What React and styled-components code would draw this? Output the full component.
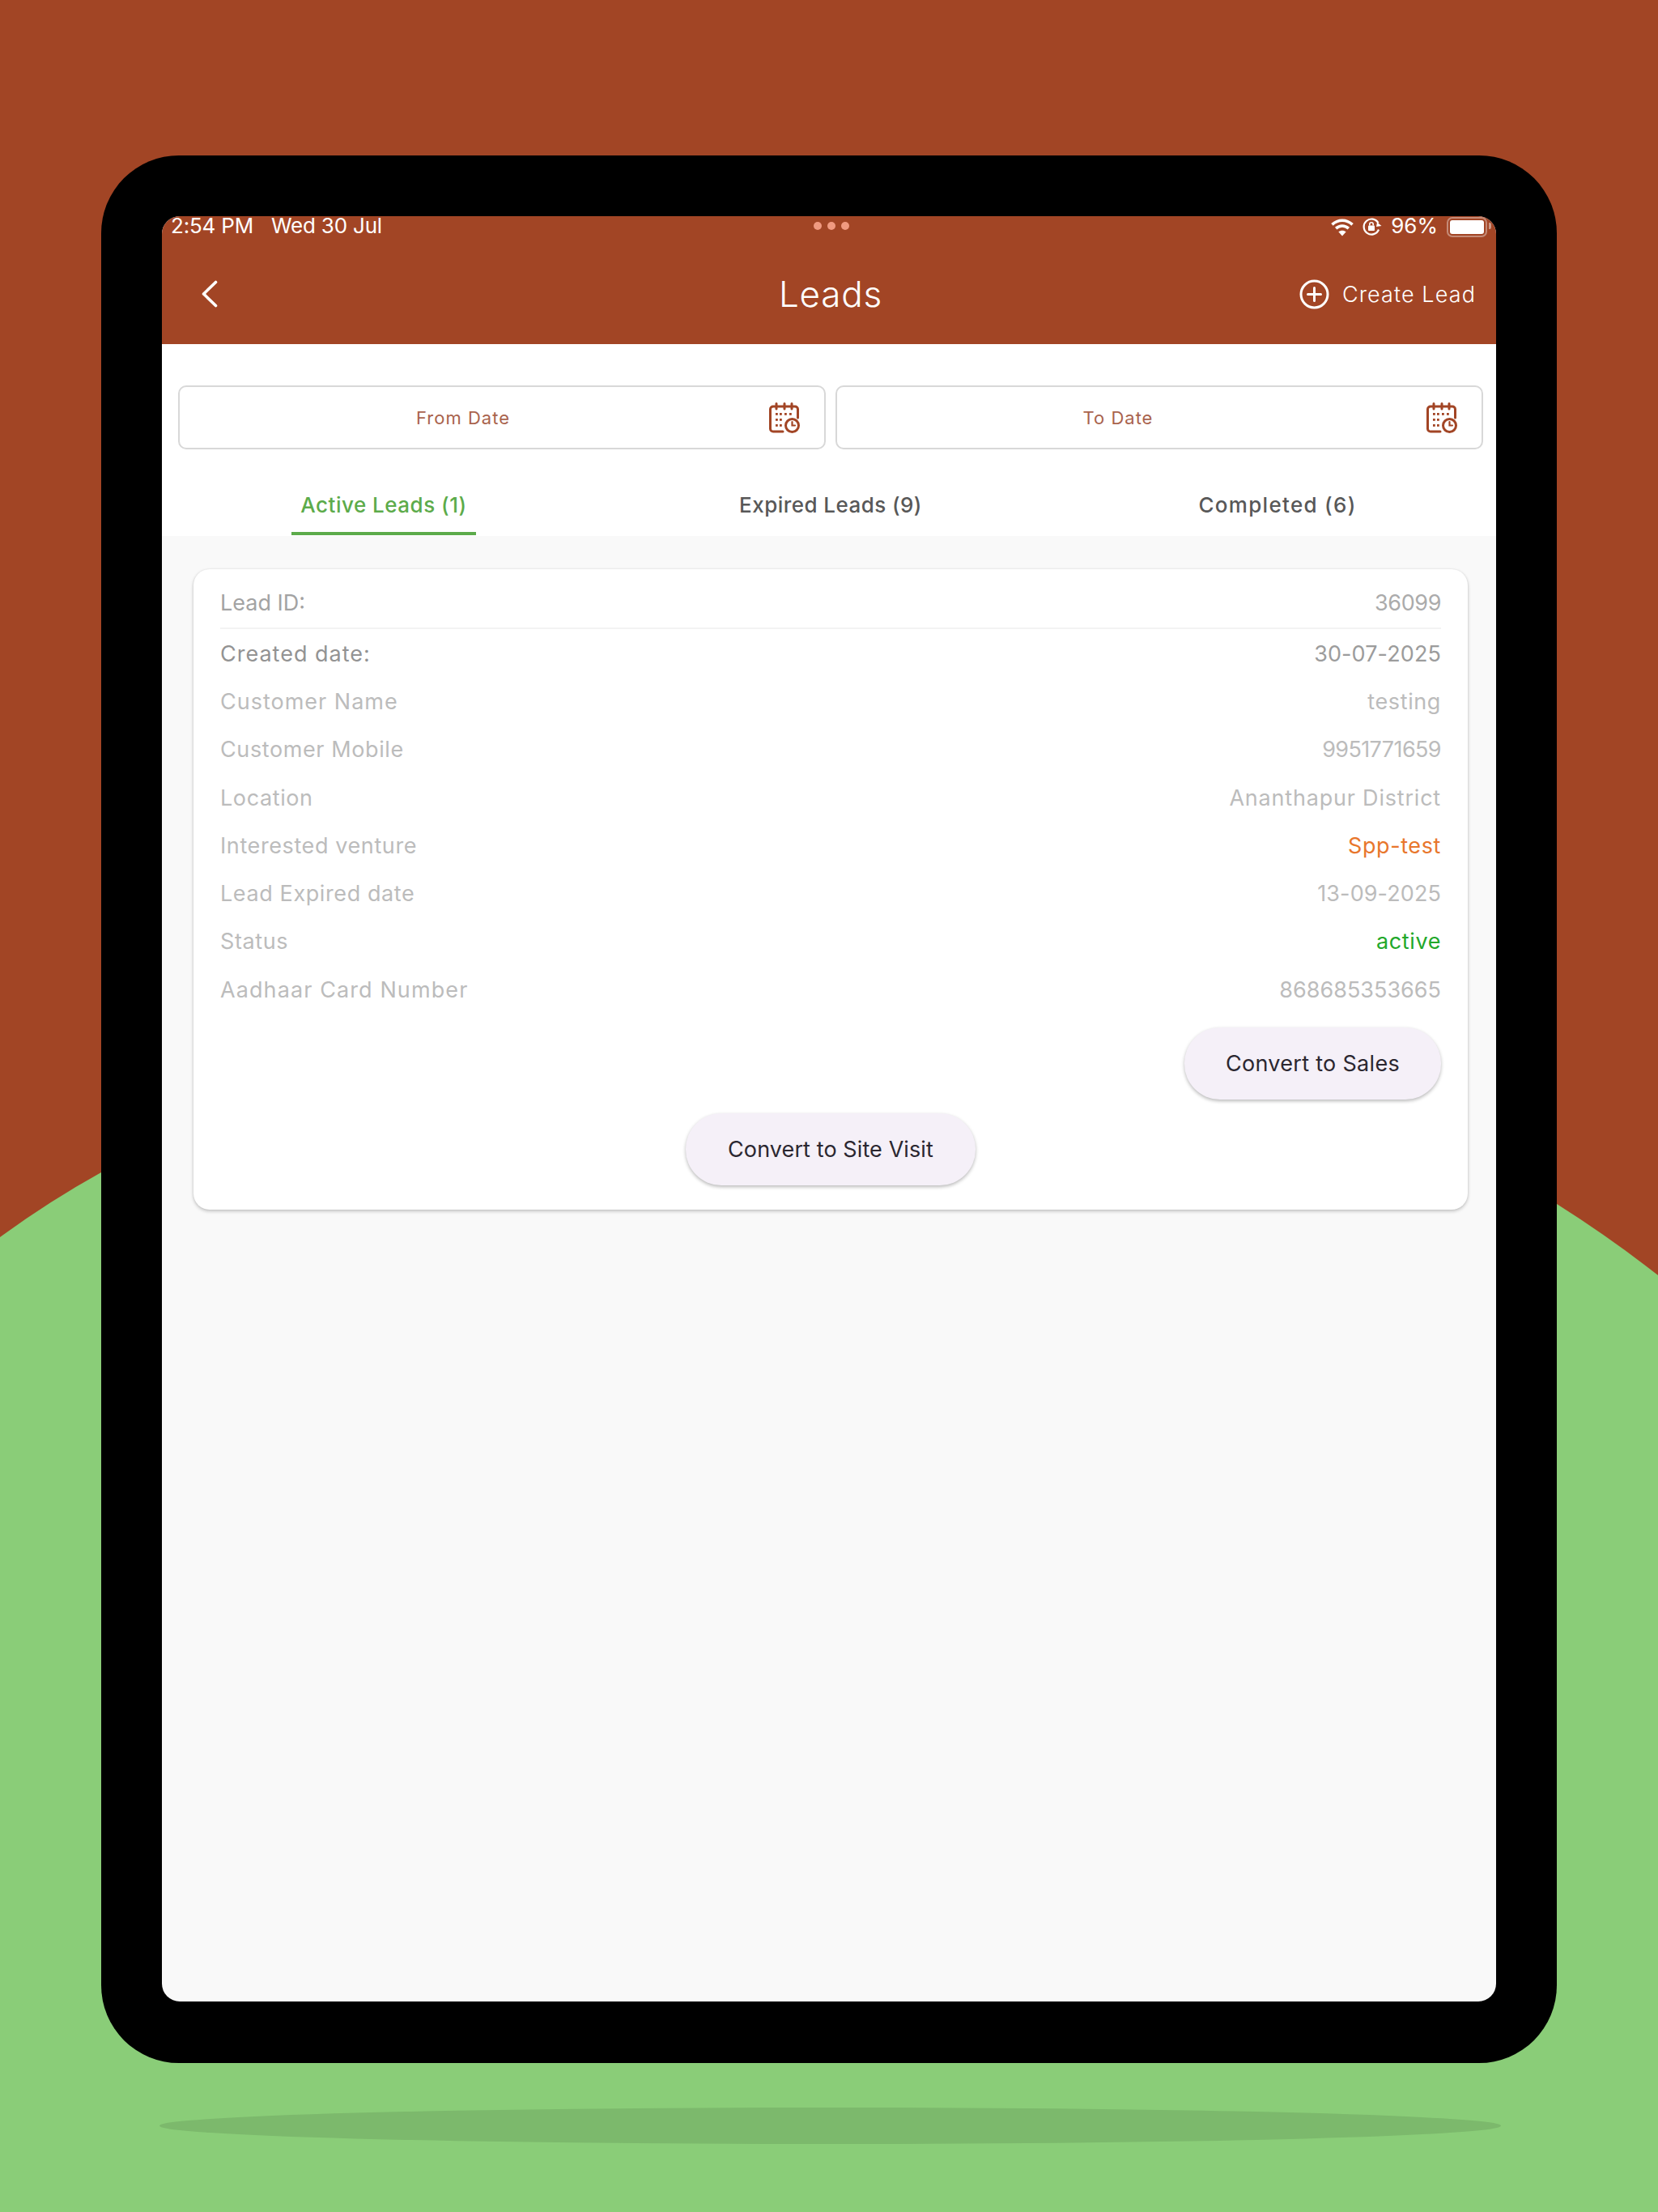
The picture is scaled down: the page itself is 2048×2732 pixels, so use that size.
import styled, { createGlobalStyle } from "styled-components";

const GlobalStyle = createGlobalStyle`
  html, body {
    margin: 0;
    padding: 0;
    background: #a24525;
  }
  * {
    box-sizing: border-box;
  }
`;

const Stage = styled.div`
  position: relative;
  width: 2048px;
  height: 2732px;
  padding-top: 192px;
  overflow: hidden;
  background: #a24525;
  font-family: Inter, "Liberation Sans", sans-serif;
`;

const Hill = styled.svg`
  position: absolute;
  top: 0;
  left: 0;
`;

const Device = styled.div`
  position: relative;
  width: 1798px;
  height: 2356px;
  margin-left: 125px;
  padding: 75px 75px 76px;
  border-radius: 96px;
  background: #000;
`;

const GroundShadow = styled.div`
  position: relative;
  width: 1657px;
  height: 45px;
  margin: 55px 0 0 197px;
  border-radius: 50%;
  background: #7cb96c;
`;

const Screen = styled.div`
  display: flex;
  flex-direction: column;
  height: 100%;
  border-radius: 22px;
  background: #f9f9f9;
`;

const Header = styled.header`
  height: 158px;
  border-radius: 22px 22px 0 0;
  background: #a24525;
  color: #fff;
`;

const StatusBar = styled.div`
  display: grid;
  grid-template-columns: 1fr auto 1fr;
  align-items: center;
  height: 26px;
  margin-bottom: 8px;
  padding: 0 5px 0 11px;
  font-size: 26px;
  line-height: 24px;
`;

const StatusLeft = styled.div`
  display: flex;
  gap: 22px;
  margin-top: -2px;
  letter-spacing: -0.2px;
`;

const Dots = styled.div`
  display: flex;
  gap: 7px;
  margin-top: -2px;
`;

const Dot = styled.span`
  width: 10px;
  height: 10px;
  border-radius: 50%;
  background: #f09a80;
`;

const StatusRight = styled.div`
  display: flex;
  align-items: center;
  justify-content: flex-end;
  gap: 11px;
`;

const Percent = styled.span`
  margin-top: -3px;
`;

const Battery = styled.div`
  position: relative;
  width: 50px;
  height: 25px;
  margin-right: 6px;
  padding: 2px;
  border: 2px solid rgba(255, 255, 255, 0.38);
  border-radius: 7px;

  &::after {
    content: "";
    position: absolute;
    top: 5px;
    right: -7px;
    width: 3px;
    height: 8px;
    border-radius: 0 2px 2px 0;
    background: rgba(255, 255, 255, 0.45);
  }
`;

const BatteryLevel = styled.div`
  height: 100%;
  border-radius: 3px;
  background: #fff;
`;

const NavBar = styled.div`
  display: grid;
  grid-template-columns: 1fr auto 1fr;
  align-items: center;
  height: 124px;
  padding: 0 25px 0 29px;
`;

const BackButton = styled.div`
  display: flex;
  margin-left: 20px;
`;

const Title = styled.h1`
  margin: 0;
  font-size: 44px;
  font-weight: 300;
  line-height: 56px;
  letter-spacing: 0.8px;
`;

const CreateLead = styled.div`
  display: flex;
  align-items: center;
  justify-content: flex-end;
  gap: 16px;
  font-size: 27px;
  font-weight: 300;
  letter-spacing: 1.1px;
`;

const Filters = styled.div`
  display: grid;
  grid-template-columns: 800px 800px;
  gap: 12px;
  padding: 51px 0 0 20px;
  background: #fff;
`;

const DateField = styled.div`
  display: flex;
  align-items: center;
  gap: ${(props) => props.$gap}px;
  height: 79px;
  padding-right: 30px;
  border: 2px solid #d8d8d8;
  border-radius: 10px;
  background: #fff;
`;

const DateLabel = styled.span`
  flex: 1;
  color: #a9634d;
  font-size: 22px;
  letter-spacing: 1px;
  text-align: center;
`;

const Tabs = styled.nav`
  display: grid;
  grid-template-columns: repeat(3, 552px);
  justify-content: center;
  height: 107px;
  padding: 0 0 1px 4px;
  background: #fff;
`;

const TabCell = styled.div`
  display: flex;
  justify-content: center;
  align-items: flex-end;
`;

const Tab = styled.div`
  padding: 0 11px 16px;
  border-bottom: 4px solid ${(props) => (props.$active ? "#5cab4a" : "transparent")};
  color: ${(props) => (props.$active ? "#5cab4a" : "#585858")};
  font-size: 26px;
  font-weight: 500;
  line-height: 34px;
  letter-spacing: ${(props) => props.$spacing}px;
`;

const Body = styled.main`
  flex: 1;
  padding: 41px 35px 0 39px;
`;

const Card = styled.section`
  padding: 10px 33px 30px;
  border-radius: 20px;
  background: #fff;
  box-shadow: 0 2px 4px rgba(0, 0, 0, 0.22), 0 0 3px rgba(0, 0, 0, 0.07);
`;

const TopRow = styled.div`
  display: flex;
  justify-content: space-between;
  align-items: center;
  height: 62px;
  padding-top: 2px;
`;

const Divider = styled.div`
  height: 2px;
  background: #f3f3f3;
`;

const Details = styled.div`
  padding-top: 1px;
`;

const Row = styled.div`
  display: flex;
  justify-content: space-between;
  align-items: center;
  height: 59.3px;
`;

const Text = styled.span`
  color: ${(props) => props.$color || "#bcbcbc"};
  font-size: 27px;
  line-height: 34px;
  letter-spacing: ${(props) => props.$spacing ?? 0.6}px;
`;

const Actions = styled.div`
  display: flex;
  justify-content: ${(props) => props.$align};
  margin-top: 17px;
`;

const ActionButton = styled.button`
  width: ${(props) => props.$width}px;
  height: 89px;
  border: 0;
  border-radius: 44px;
  background: #f5f0f8;
  box-shadow: 0 2px 4px rgba(0, 0, 0, 0.28);
  color: #2b2730;
  font-family: inherit;
  font-size: 27px;
  font-weight: 400;
  letter-spacing: ${(props) => props.$spacing}px;
`;

const WifiIcon = () => (
  <svg width="28" height="23" viewBox="1 0 26 22" fill="none" stroke="#fff" strokeWidth="3.4">
    <path d="M2 8 C9 1.5 19 1.5 26 8" />
    <path d="M6.5 12.5 C11 8.5 17 8.5 21.5 12.5" />
    <path d="M14 21.5 L9.5 16.5 C12 14.5 16 14.5 18.5 16.5 Z" fill="#fff" stroke="none" />
  </svg>
);

const RotationLockIcon = () => (
  <svg width="24" height="22" viewBox="0 0 24 22" fill="none" stroke="#fff" strokeWidth="2.2">
    <path d="M20 14.5 A9.5 9.5 0 1 1 19.5 6.5" />
    <path d="M18 5.5 L23.5 10 L17 11 Z" fill="#fff" stroke="none" />
    <rect x="7" y="9.5" width="8" height="6.5" rx="1" fill="#fff" stroke="none" />
    <path d="M8.8 9.5 V8 a2.2 2.2 0 0 1 4.4 0 V9.5" strokeWidth="1.6" />
  </svg>
);

const BackIcon = () => (
  <svg width="20" height="34" viewBox="0 0 20 34" fill="none" stroke="#fff" strokeWidth="3.6" strokeLinecap="round" strokeLinejoin="round">
    <path d="M17.5 2.5 L2.5 17 L17.5 31.5" />
  </svg>
);

const PlusCircleIcon = () => (
  <svg width="37" height="37" viewBox="0 0 37 37" fill="none" stroke="#fff" strokeWidth="3">
    <circle cx="18.5" cy="18.5" r="16.5" />
    <path d="M18.5 10.5 V26.5 M10.5 18.5 H26.5" strokeLinecap="round" />
  </svg>
);

const CalendarIcon = () => (
  <svg width="38" height="38" viewBox="0 0 38 38" fill="none" stroke="#a24525" strokeWidth="3" strokeLinecap="round">
    <path d="M17 36 H5 a3.5 3.5 0 0 1 -3.5 -3.5 V8.5 A3.5 3.5 0 0 1 5 5 H32 a3.5 3.5 0 0 1 3.5 3.5 V19" />
    <path d="M9 1.5 V8 M19 1.5 V8 M28 1.5 V8" />
    <g fill="#a24525" stroke="none">
      <rect x="8" y="13" width="2.8" height="2.8" />
      <rect x="13" y="13" width="2.8" height="2.8" />
      <rect x="19" y="13" width="2.8" height="2.8" />
      <rect x="25" y="13" width="2.8" height="2.8" />
      <rect x="8" y="20" width="2.8" height="2.8" />
      <rect x="13" y="20" width="2.8" height="2.8" />
      <rect x="8" y="27" width="2.8" height="2.8" />
      <rect x="13" y="27" width="2.8" height="2.8" />
    </g>
    <circle cx="28.5" cy="28.5" r="8" fill="#fff" />
    <path d="M28.5 24 V28.5 H32" strokeWidth="2.2" />
  </svg>
);

const details = [
  { label: "Created date:", value: "30-07-2025", labelColor: "#939393", valueColor: "#9c9c9c", labelSpacing: 1, valueSpacing: 0.1 },
  { label: "Customer Name", value: "testing", labelSpacing: 1 },
  { label: "Customer Mobile", value: "9951771659", valueSpacing: -0.6 },
  { label: "Location", value: "Ananthapur District", valueSpacing: 0.8 },
  { label: "Interested venture", value: "Spp-test", valueColor: "#e8762c" },
  { label: "Lead Expired date", value: "13-09-2025", valueSpacing: 0.1 },
  { label: "Status", value: "active", valueColor: "#22a82a" },
  { label: "Aadhaar Card Number", value: "868685353665", labelSpacing: 1.1, valueSpacing: 0 },
];

const tabs = [
  { label: "Active Leads (1)", active: true, spacing: 0.5 },
  { label: "Expired Leads (9)", spacing: 0.45 },
  { label: "Completed (6)", spacing: 1.3 },
];

const App = () => {
  return (
    <>
      <GlobalStyle />
      <Stage>
        <Hill width="2048" height="2732" viewBox="0 0 2048 2732">
          <path
            d="M0 1528 Q60 1484 125 1448 L1923 1487 Q1988 1528 2048 1575 L2048 2732 L0 2732 Z"
            fill="#8acd78"
          />
        </Hill>
        <Device>
          <Screen>
            <Header>
              <StatusBar>
                <StatusLeft>
                  <span>2:54 PM</span>
                  <span>Wed 30 Jul</span>
                </StatusLeft>
                <Dots>
                  <Dot />
                  <Dot />
                  <Dot />
                </Dots>
                <StatusRight>
                  <WifiIcon />
                  <RotationLockIcon />
                  <Percent>96%</Percent>
                  <Battery>
                    <BatteryLevel />
                  </Battery>
                </StatusRight>
              </StatusBar>
              <NavBar>
                <BackButton>
                  <BackIcon />
                </BackButton>
                <Title>Leads</Title>
                <CreateLead>
                  <PlusCircleIcon />
                  <span>Create Lead</span>
                </CreateLead>
              </NavBar>
            </Header>
            <Filters>
              <DateField $gap={28}>
                <DateLabel>From Date</DateLabel>
                <CalendarIcon />
              </DateField>
              <DateField $gap={34}>
                <DateLabel>To Date</DateLabel>
                <CalendarIcon />
              </DateField>
            </Filters>
            <Tabs>
              {tabs.map((tab) => (
                <TabCell key={tab.label}>
                  <Tab $active={tab.active} $spacing={tab.spacing}>{tab.label}</Tab>
                </TabCell>
              ))}
            </Tabs>
            <Body>
              <Card>
                <TopRow>
                  <Text $color="#a3a3a3" $spacing={0}>Lead ID:</Text>
                  <Text $color="#ababab" $spacing={-0.4}>36099</Text>
                </TopRow>
                <Divider />
                <Details>
                  {details.map((item) => (
                    <Row key={item.label}>
                      <Text $color={item.labelColor} $spacing={item.labelSpacing}>{item.label}</Text>
                      <Text $color={item.valueColor} $spacing={item.valueSpacing}>{item.value}</Text>
                    </Row>
                  ))}
                </Details>
                <Actions $align="flex-end">
                  <ActionButton $width={317} $spacing={0.3}>Convert to Sales</ActionButton>
                </Actions>
                <Actions $align="center">
                  <ActionButton $width={358} $spacing={0.1}>Convert to Site Visit</ActionButton>
                </Actions>
              </Card>
            </Body>
          </Screen>
        </Device>
        <GroundShadow />
      </Stage>
    </>
  );
};

export default App;
